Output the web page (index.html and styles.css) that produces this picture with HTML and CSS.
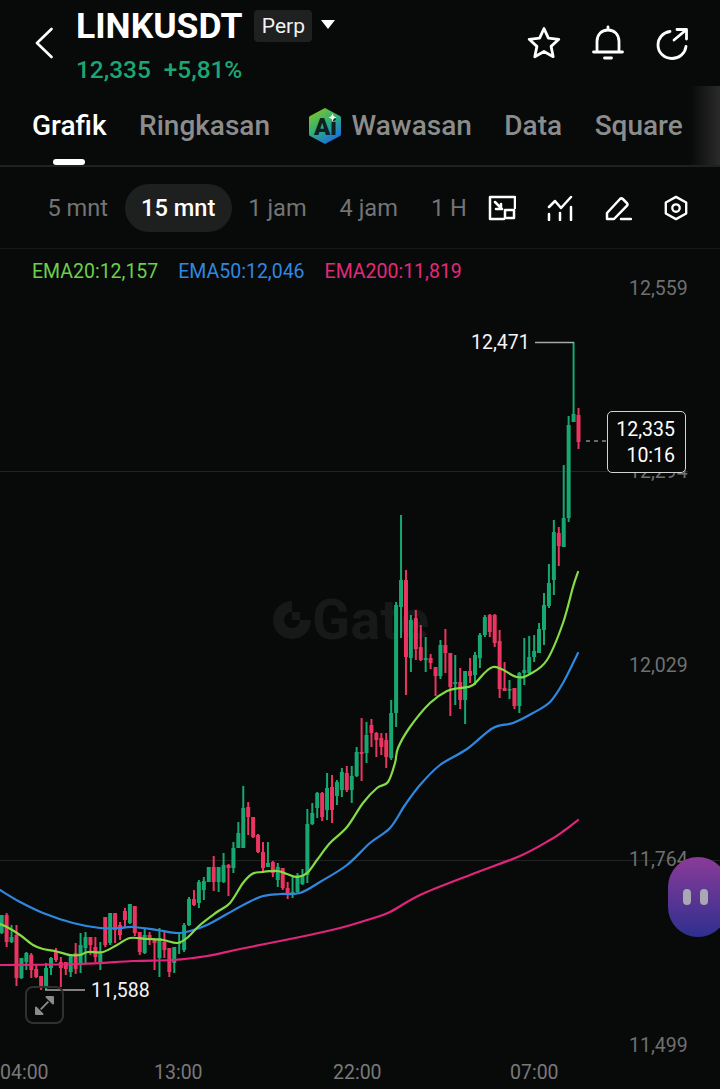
FILE: index.html
```html
<!DOCTYPE html>
<html lang="id">
<head>
<meta charset="utf-8">
<title>LINKUSDT</title>
<link rel="stylesheet" href="styles.css">
</head>
<body>
<div class="app">
  <header class="topbar">
    <svg class="back" viewBox="0 0 18 32"><path d="M16.5 2 2 16l14.500 14"/></svg>
    <div class="symbol">
      <div class="symbol-row">
        <span class="pair">LINKUSDT</span>
        <span class="badge">Perp</span>
        <span class="caret"></span>
      </div>
      <div class="quote"><span>12,335</span><span>+5,81%</span></div>
    </div>
    <div class="actions">
      <svg class="act" viewBox="0 0 36 36"><path d="M18 3.500l4.400 9.600 10.400 1.200-7.700 7.100 2.100 10.300L18 26.500l-9.200 5.200 2.100-10.300-7.700-7.100 10.400-1.200z"/></svg>
      <svg class="act" viewBox="0 0 36 36"><path d="M18 2v3M7 26V16.500C7 9.500 11.500 5 18 5s11 4.500 11 11.500V26M3.500 27h29M14.500 33h7"/></svg>
      <svg class="act" viewBox="0 0 36 36"><path d="M16 6.500C9 7.500 4 13 4 20c0 7.500 6 13.500 14 13.500 7.200 0 13-5 14-12M20 15 32 5M23 4.500h9.500V14"/></svg>
    </div>
  </header>

  <nav class="tabs">
    <span class="tab tab-on">Grafik</span>
    <span class="tab">Ringkasan</span>
    <span class="tab tab-ai">
      <svg class="ai" viewBox="0 0 34 38">
        <defs><linearGradient id="aiGrad" x1="0.1" y1="0" x2="0.7" y2="1"><stop offset="0" stop-color="#8cc81a"/><stop offset="0.5" stop-color="#2fb07a"/><stop offset="1" stop-color="#1c6ae6"/></linearGradient></defs>
        <path class="ai-hex" d="M17 1 32 9a2 2 0 0 1 1 2v16a2 2 0 0 1-1 2l-15 8-15-8a2 2 0 0 1-1-2V11a2 2 0 0 1 1-2z"/>
        <text class="ai-text" x="6" y="28">Ai</text>
        <path class="ai-spark" d="M24.500 6.500l1.300 2.700 2.700 1.300-2.700 1.300-1.300 2.700-1.300-2.700-2.700-1.300 2.700-1.300z"/>
      </svg>
      Wawasan
    </span>
    <span class="tab">Data</span>
    <span class="tab">Square</span>
    <span class="tab-fade"></span>
    <span class="tab-bar"></span>
  </nav>

  <div class="timebar">
    <span class="tf">5 mnt</span>
    <span class="tf tf-on">15 mnt</span>
    <span class="tf">1 jam</span>
    <span class="tf">4 jam</span>
    <span class="tf">1 H</span>
    <div class="tools">
      <svg class="tool" viewBox="0 0 28 26"><path d="M16 24H2V2h25v11M17 15h9v8h-9zM7 7l7 7M13 9v5H8"/></svg>
      <svg class="tool" viewBox="0 0 28 26"><path d="M3 12 9 6l6 7L25 2M3 19v6M14 18v7M25 12v13"/></svg>
      <svg class="tool" viewBox="0 0 28 26"><path d="M3 24v-6L16 4a2 2 0 0 1 2.800 0l4 4a2 2 0 0 1 0 2.800L10 24zM17 24h10"/></svg>
      <svg class="tool" viewBox="0 0 28 28"><path d="M14 2 25 8v12l-11 6-11-6V8z"/><circle cx="14" cy="14" r="4"/></svg>
    </div>
  </div>

  <main class="chart">
    <div class="legend">
      <span class="ema20">EMA20:12,157</span>
      <span class="ema50">EMA50:12,046</span>
      <span class="ema200">EMA200:11,819</span>
    </div>

    <div class="grid grid-a"></div>
    <div class="grid grid-b"></div>

    <div class="mark">
      <svg class="mark-g" viewBox="0 0 38 38"><path d="M19 0a19 19 0 1 0 19 19H27a8 8 0 1 1-8-8zM19 11h8v8h-8z"/></svg>
      <span>Gate</span>
    </div>

    <span class="axis y1">12,559</span>
    <span class="axis y2">12,294</span>
    <span class="axis y3">12,029</span>
    <span class="axis y4">11,764</span>
    <span class="axis y5">11,499</span>

    <svg class="plot" viewBox="0 249 720 840">
      <g id="candles"></g>
      <path class="line l-pink" data-points="0,965 80,964 133,961 173,960 207,956 240,949 300,937 340,928 367,920 390,912 420,895 470,875 520,856 550,840 565,830 578,820"/>
      <path class="line l-blue" data-points="0,890 20,902 43,913 73,923 100,928 120,928 133,927 157,930 177,933 190,931 207,925 227,914 247,903 263,896 280,894 300,893 320,882 347,865 370,843 390,828 405,805 420,785 440,765 467,749 493,728 513,723 533,713 550,702 563,683 578,653"/>
      <path class="line l-green" data-points="0,924 7,927 20,935 33,945 43,949 55,951 70,955 80,955 88,952 103,952 117,945 130,938 147,939 163,940 177,943 187,938 200,925 217,912 230,903 243,883 252,874 262,872 277,871 287,874 297,877 307,873 317,860 330,843 347,827 363,803 377,788 388,782 395,763 398,748 410,727 430,703 447,691 460,688 473,685 493,667 517,677 530,674 547,660 563,623 573,587 578,572"/>
      <path class="callout" d="M535 342.500h39M45 990h40"/>
      <path class="dash" d="M586 441h21"/>
    </svg>

    <span class="hl hl-high">12,471</span>
    <span class="hl hl-low">11,588</span>

    <div class="pricebox"><span>12,335</span><span>10:16</span></div>

    <button class="expand">
      <svg viewBox="0 0 20 20"><path d="M12 1h7v7zM8 19H1v-7zM14 6 6 14"/></svg>
    </button>

    <span class="tick t1">04:00</span>
    <span class="tick t2">13:00</span>
    <span class="tick t3">22:00</span>
    <span class="tick t4">07:00</span>

    <div class="bot"><i></i><i></i></div>
  </main>
</div>
<script src="chart.js"></script>
</body>
</html>
```
FILE: styles.css
```css
* { box-sizing: border-box; }
html, body { margin: 0; padding: 0; background: #080909; }
body { font-family: Roboto, "Liberation Sans", sans-serif; color: #fff; }
.app { width: 720px; height: 1089px; display: flex; flex-direction: column; overflow: hidden; background: #080909; }

/* top bar */
.topbar { height: 86px; display: flex; align-items: flex-start; padding: 0 30px 0 35px; flex: none; }
.back { width: 18px; height: 32px; margin-top: 27px; fill: none; stroke: #fff; stroke-width: 2.600; stroke-linecap: round; stroke-linejoin: round; }
.symbol { margin-left: 23px; padding-top: 8px; }
.symbol-row { display: flex; align-items: center; height: 36px; }
.pair { font-size: 35.500px; font-weight: 700; line-height: 36px; }
.badge { margin-left: 12px; width: 58px; height: 32px; background: #1f2020; border-radius: 4px; font-size: 21px; line-height: 32px; text-align: center; color: #f2f2f2; }
.caret { margin-left: 9px; margin-top: -4px; border-left: 7px solid transparent; border-right: 7px solid transparent; border-top: 9px solid #fff; }
.quote { display: flex; gap: 13px; margin-top: 13px; font-size: 24.400px; font-weight: 500; line-height: 26px; color: #1ba672; }
.actions { margin-left: auto; margin-top: 25px; display: flex; gap: 28px; }
.act { width: 36px; height: 36px; fill: none; stroke: #fff; stroke-width: 2.800; stroke-linecap: round; stroke-linejoin: round; }

/* tabs */
.tabs { position: relative; height: 81px; flex: none; display: flex; align-items: center; gap: 32.500px; padding: 0 0 0 32px; border-bottom: 2px solid #1f2020; }
.tab { font-size: 28px; font-weight: 500; color: #8b8c8c; line-height: 32px; white-space: nowrap; }
.tab-on { color: #fff; }
.tab-ai { display: flex; align-items: center; gap: 10px; margin-left: 5px; }
.ai { width: 34px; height: 38px; }
.ai-hex { fill: url(#aiGrad); }
.ai-text { font-family: Roboto, sans-serif; font-size: 24px; font-weight: 900; fill: #10201c; }
.ai-spark { fill: #eafbe0; }
.tab-fade { position: absolute; right: 0; top: 0; bottom: 0; width: 30px; background: linear-gradient(90deg, #080909, #2a2a2a); }
.tab-bar { position: absolute; left: 53px; bottom: 0; width: 32px; height: 6px; border-radius: 3px; background: #fff; }

/* timeframe bar */
.timebar { height: 82px; flex: none; display: flex; align-items: center; padding: 0 30px 0 31px; border-bottom: 1px solid #171818; }
.tf { padding: 0 16.500px; height: 48px; line-height: 48px; font-size: 23.600px; color: #737474; border-radius: 24px; white-space: nowrap; }
.tf-on { background: #1e1f1f; color: #fff; font-weight: 500; }
.tools { margin-left: auto; display: flex; gap: 30px; }
.tool { width: 28px; height: 26px; fill: none; stroke: #fff; stroke-width: 2.500; stroke-linecap: round; stroke-linejoin: round; }

/* chart: a free canvas, items sit at their plotted coordinates */
.chart { position: relative; flex: 1; overflow: hidden; }
.legend { position: absolute; left: 32px; top: 11px; display: flex; gap: 20px; font-size: 19.500px; line-height: 24px; white-space: nowrap; }
.ema20 { color: #6cd04b; }
.ema50 { color: #2f88e0; }
.ema200 { color: #e32a7b; }
.grid { position: absolute; left: 0; right: 32px; height: 1px; background: #222323; }
.grid-a { top: 222px; }
.grid-b { top: 611px; right: 0; }
.plot { position: absolute; left: 0; top: 0; width: 720px; height: 840px; }
.line { fill: none; stroke-width: 2.200; stroke-linejoin: round; stroke-linecap: round; }
.l-green { stroke: #86dc45; }
.l-blue { stroke: #2f88e0; }
.l-pink { stroke: #e0257b; }
.callout { fill: none; stroke: #a8a8a8; stroke-width: 1.500; }
.dash { fill: none; stroke: #c8c8c8; stroke-width: 1.200; stroke-dasharray: 4 4; }
.cg { fill: #17a771; }
.cr { fill: #ea3560; }

.mark { position: absolute; left: 273px; top: 351px; display: flex; align-items: center; gap: 1px; color: #171818; font-size: 56px; font-weight: 700; line-height: 40px; }
.mark-g { width: 38px; height: 38px; fill: #171818; }

.axis, .tick, .hl { position: absolute; font-size: 19.500px; line-height: 24px; }
.axis { left: 629px; color: #6f7070; }
.y1 { top: 28px; }
.y2 { top: 211px; }
.y3 { top: 405px; }
.y4 { top: 599px; }
.y5 { top: 785px; }
.tick { color: #787979; top: 812px; }
.t1 { left: 0; }
.t2 { left: 154px; }
.t3 { left: 333px; }
.t4 { left: 510px; }
.hl { color: #f4f4f4; }
.hl-high { left: 471px; top: 82px; }
.hl-low { left: 91px; top: 730px; }

.pricebox { position: absolute; left: 607px; top: 162px; width: 79px; height: 62px; display: flex; flex-direction: column; align-items: flex-end; justify-content: center; padding: 2px 10px 0 0; background: #080909; border: 1.500px solid #d4d4d4; border-radius: 5px; font-size: 19.500px; line-height: 26px; color: #fff; }

.expand { position: absolute; left: 25px; top: 737px; width: 39px; height: 38px; padding: 0; display: flex; align-items: center; justify-content: center; background: transparent; border: 2px solid #2f3030; border-radius: 8px; }
.expand svg { width: 19px; height: 19px; fill: #8a8a8a; stroke: #8a8a8a; stroke-width: 2; stroke-linejoin: round; }

.bot { position: absolute; left: 668px; top: 608px; width: 60px; height: 80px; display: flex; gap: 9px; align-items: center; padding-left: 15px; border-radius: 40px; background: linear-gradient(180deg, #8b3b98, #2e2f8f); }
.bot i { width: 8px; height: 16px; border-radius: 4px; background: #a9a7b4; }
```
FILE: chart.js
```js
// [colour, wickTop, bodyTop, bodyBottom, wickBottom], one candle every 4.93px
var data = [
['g',915,915,933,934],['r',913,915,942,947],['g',925,937,942,943],['r',925,935,978,986],['g',958,958,978,979],
['g',952,953,962,970],['r',953,955,970,978],['r',965,969,977,978],['r',976,976,988,990],['g',963,968,987,990],
['g',957,958,968,975],['r',948,952,960,962],['r',957,962,968,987],['r',962,962,969,975],['g',954,955,972,977],
['r',943,953,969,974],['g',933,945,965,973],['g',932,937,948,963],['r',937,937,945,955],['r',937,947,957,962],
['g',942,952,963,970],['r',917,917,945,947],['g',913,913,943,945],['r',913,913,930,943],['r',922,925,935,940],
['r',908,911,920,927],['g',904,904,923,924],['r',906,906,933,936],['r',932,932,952,955],['g',928,935,953,954],
['r',932,935,940,945],['r',938,939,943,970],['g',928,938,958,977],['r',932,942,950,958],['r',948,948,972,977],
['g',947,947,963,973],['g',933,942,944,954],['g',923,925,950,952],['g',897,899,925,926],['r',890,899,905,906],
['g',880,882,903,908],['g',877,881,890,900],['g',867,867,882,882],['r',856,867,882,891],['g',867,867,882,892],
['g',853,865,882,883],['r',864,865,868,896],['g',842,848,868,873],['g',822,833,848,848],['g',786,808,848,848],
['r',802,807,817,835],['r',817,817,837,838],['r',834,835,852,853],['r',842,852,868,873],['g',842,863,867,867],
['r',861,862,873,877],['g',863,867,880,887],['r',868,868,888,890],['r',882,888,895,899],['g',877,892,895,898],
['g',873,875,892,893],['g',869,875,884,885],['g',809,824,875,883],['g',803,813,824,825],['g',792,793,808,818],
['r',792,793,817,821],['g',773,788,810,820],['r',775,787,810,823],['g',780,782,796,805],['g',768,772,790,797],
['r',766,773,790,792],['g',766,776,790,803],['g',747,752,776,777],['r',718,752,754,781],['g',722,735,753,763],
['r',719,725,733,747],['r',732,733,740,757],['r',733,738,747,755],['r',733,740,757,768],['g',700,713,758,760],
['g',602,605,713,727],['g',515,580,607,638],['r',570,580,657,695],['g',615,620,658,672],['r',610,618,649,660],
['r',625,647,660,661],['g',637,658,660,672],['r',654,658,663,669],['r',667,667,676,696],['g',640,645,676,679],
['r',629,645,653,673],['r',653,653,687,716],['g',655,682,684,705],['r',668,682,700,709],['g',671,671,700,724],
['r',658,671,676,683],['g',652,655,675,685],['g',633,635,658,668],['g',615,617,635,637],['r',614,615,632,637],
['r',614,615,643,647],['r',630,641,689,698],['r',662,688,691,691],['g',680,689,690,699],['r',688,688,706,709],
['g',672,673,706,713],['g',638,670,673,685],['g',636,657,673,675],['g',635,651,657,662],['g',623,629,653,653],
['g',593,605,630,645],['g',564,583,606,608],['g',520,532,580,595],['r',527,533,546,566],['g',465,518,547,547],
['g',416,425,518,522],['g',342,414,422,422],['r',408,415,442,449]
];
var NS = 'http://www.w3.org/2000/svg';
var layer = document.getElementById('candles');
function rect(x, y, w, h, cls) {
  var r = document.createElementNS(NS, 'rect');
  r.setAttribute('x', x.toFixed(2));
  r.setAttribute('y', y);
  r.setAttribute('width', w);
  r.setAttribute('height', Math.max(h, 1.5));
  r.setAttribute('class', cls);
  layer.appendChild(r);
}
data.forEach(function (c, i) {
  var x = 1.7 + 4.93 * i;
  var cls = c[0] === 'g' ? 'cg' : 'cr';
  rect(x - 1, c[1], 2, c[4] - c[1], cls);
  rect(x - 2, c[2], 4, c[3] - c[2], cls);
});
// moving averages: smooth the sampled points with Catmull-Rom segments
document.querySelectorAll('.line').forEach(function (line) {
  var p = line.getAttribute('data-points').split(' ').map(function (s) { return s.split(',').map(Number); });
  var d = 'M' + p[0];
  for (var i = 0; i < p.length - 1; i++) {
    var a = p[Math.max(i - 1, 0)], b = p[i], c = p[i + 1], e = p[Math.min(i + 2, p.length - 1)];
    d += 'C' + (b[0] + (c[0] - a[0]) / 6).toFixed(1) + ',' + (b[1] + (c[1] - a[1]) / 6).toFixed(1) +
         ' ' + (c[0] - (e[0] - b[0]) / 6).toFixed(1) + ',' + (c[1] - (e[1] - b[1]) / 6).toFixed(1) +
         ' ' + c[0] + ',' + c[1];
  }
  line.setAttribute('d', d);
});
```
